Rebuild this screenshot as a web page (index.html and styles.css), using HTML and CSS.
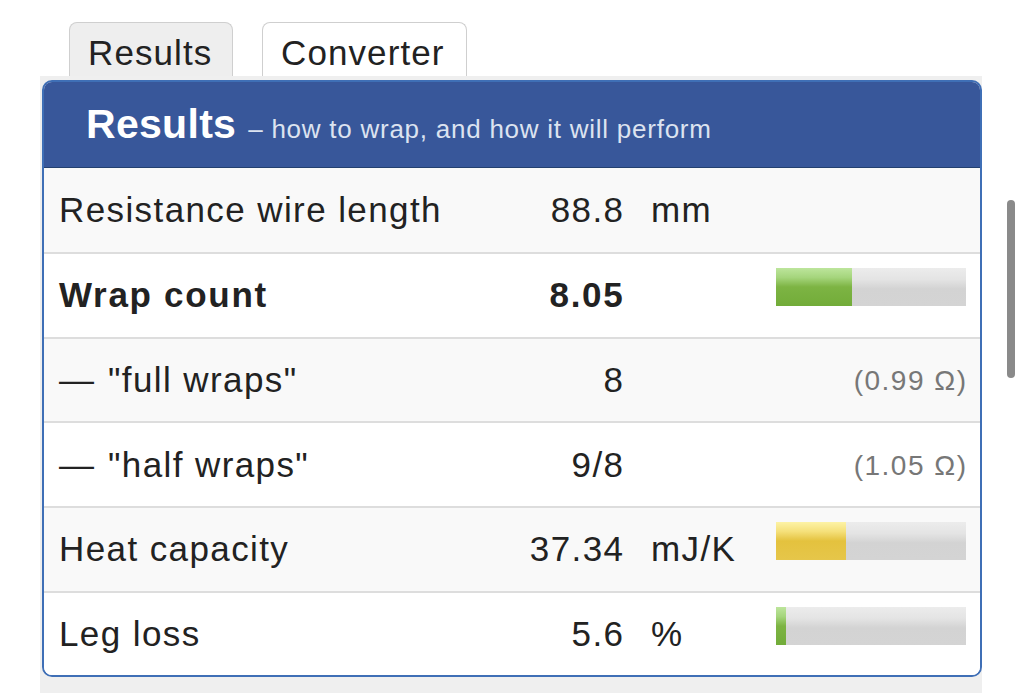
FILE: index.html
```html
<!DOCTYPE html>
<html>
<head>
<meta charset="utf-8">
<link rel="stylesheet" href="styles.css">
</head>
<body>
<div class="page">
  <div class="tabs">
    <div class="tab active">Results</div>
    <div class="tab">Converter</div>
  </div>
  <div class="tab-body">
    <div class="panel">
      <div class="panel-head"><span class="title">Results</span><span class="sub">– how to wrap, and how it will perform</span></div>
      <div class="row odd">
        <div class="label">Resistance wire length</div>
        <div class="value">88.8</div>
        <div class="unit">mm</div>
        <div class="extra"></div>
      </div>
      <div class="row">
        <div class="label bold">Wrap count</div>
        <div class="value bold">8.05</div>
        <div class="unit"></div>
        <div class="extra"><div class="bar"><div class="fill green" style="width:40%"></div></div></div>
      </div>
      <div class="row odd">
        <div class="label"><span class="dash">—</span>"full wraps"</div>
        <div class="value">8</div>
        <div class="unit"></div>
        <div class="extra note">(0.99 Ω)</div>
      </div>
      <div class="row">
        <div class="label"><span class="dash">—</span>"half wraps"</div>
        <div class="value">9/8</div>
        <div class="unit"></div>
        <div class="extra note">(1.05 Ω)</div>
      </div>
      <div class="row odd">
        <div class="label">Heat capacity</div>
        <div class="value">37.34</div>
        <div class="unit">mJ/K</div>
        <div class="extra"><div class="bar"><div class="fill yellow" style="width:37%"></div></div></div>
      </div>
      <div class="row last">
        <div class="label">Leg loss</div>
        <div class="value">5.6</div>
        <div class="unit">%</div>
        <div class="extra"><div class="bar"><div class="fill green" style="width:5.5%"></div></div></div>
      </div>
    </div>
  </div>
  <div class="scrollbar"></div>
</div>
</body>
</html>
```

FILE: styles.css
```css
html, body {
  margin: 0;
  padding: 0;
  background: #fff;
}
body {
  font-family: "Liberation Sans", Arial, sans-serif;
  color: #222;
}
.page {
  width: 1024px;
  height: 693px;
  overflow: hidden;
  padding-top: 22px;
  box-sizing: border-box;
}
.tabs {
  display: flex;
  gap: 29px;
  padding-left: 69px;
  height: 54px;
}
.tab {
  box-sizing: border-box;
  height: 56px;
  padding: 0 18px;
  border: 1px solid #cfcfcf;
  border-bottom: none;
  border-radius: 8px 8px 0 0;
  background: #fff;
  font-size: 35px;
  letter-spacing: 1.1px;
  line-height: 60px;
  color: #222;
}
.tab.active {
  width: 164px;
  background: #eeeeee;
}
.tab:not(.active) {
  width: 205px;
}
.tab-body {
  margin-left: 40px;
  width: 942px;
  background: #efefef;
  padding: 4px 0 17px 2px;
  box-sizing: border-box;
  position: relative;
}
.panel {
  width: 940px;
  box-sizing: border-box;
  border: 2px solid #3f6fb6;
  border-radius: 10px;
  overflow: hidden;
  background: #fff;
}
.panel-head {
  box-sizing: border-box;
  height: 86px;
  background: #38579a;
  border-bottom: 1px solid #23406f;
  padding-left: 42px;
  display: flex;
  align-items: baseline;
  line-height: 84px;
  color: #fff;
}
.title {
  font-size: 41px;
  font-weight: bold;
  letter-spacing: 0.3px;
}
.sub {
  font-size: 26px;
  letter-spacing: 0.75px;
  color: #dce3f0;
  margin-left: 12px;
}
.row {
  box-sizing: border-box;
  display: grid;
  grid-template-columns: 434px 130px 153px 190px;
  align-items: center;
  height: 84.7px;
  padding: 0 14px 0 15px;
  border-top: 2px solid #dddddd;
  background: #fff;
  font-size: 35px;
  letter-spacing: 1.4px;
}
.panel-head + .row {
  border-top: none;
  height: 84px;
}
.row.odd {
  background: #f9f9f9;
}
.label {
  white-space: nowrap;
}
.dash {
  display: inline-block;
  letter-spacing: 0;
  margin-right: 14px;
}
.bold {
  font-weight: bold;
  letter-spacing: 1.7px;
}
.value {
  text-align: right;
  margin-right: -1.4px;
}
.unit {
  padding-left: 28px;
}
.extra {
  display: flex;
  justify-content: flex-end;
}
.note {
  font-size: 28px;
  letter-spacing: 1.5px;
  color: #777;
  text-align: right;
  margin-left: -160px;
  padding-top: 2px;
  margin-right: -1.5px;
}
.bar {
  width: 190px;
  height: 38px;
  margin-bottom: 16px;
  background: linear-gradient(#ececec 0%, #e4e4e4 30%, #d3d3d3 55%, #d4d4d4 100%);
  display: flex;
}
.fill {
  height: 100%;
}
.fill.green {
  background: linear-gradient(#bde59c 0%, #a5d57c 25%, #7db443 50%, #72ac39 100%);
}
.fill.yellow {
  background: linear-gradient(#fdf3a6 0%, #f5e07a 25%, #e4c23e 50%, #e6c64a 100%);
}
.scrollbar {
  position: absolute;
  left: 1007px;
  top: 200px;
  width: 8px;
  height: 178px;
  border-radius: 4px;
  background: #8a8a8a;
}
```
